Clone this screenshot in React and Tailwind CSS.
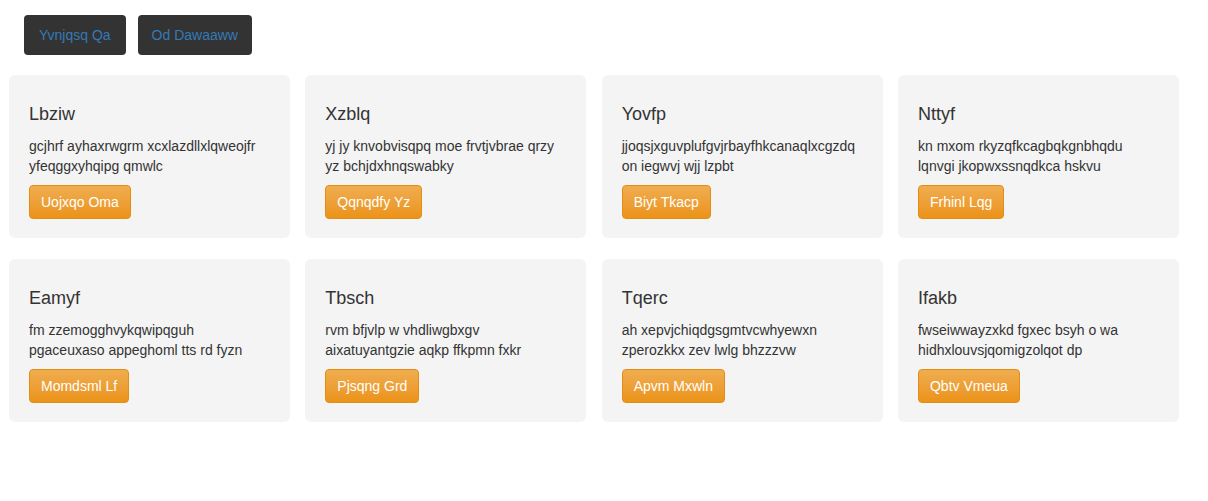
import React from "react";

const cards = [
  { t: "Lbziw", d: "gcjhrf ayhaxrwgrm xcxlazdllxlqweojfr yfeqggxyhqipg qmwlc", b: "Uojxqo Oma" },
  { t: "Xzblq", d: "yj jy knvobvisqpq moe frvtjvbrae qrzy yz bchjdxhnqswabky", b: "Qqnqdfy Yz" },
  { t: "Yovfp", d: "jjoqsjxguvplufgvjrbayfhkcanaqlxcgzdq on iegwvj wjj lzpbt", b: "Biyt Tkacp" },
  { t: "Nttyf", d: "kn mxom rkyzqfkcagbqkgnbhqdu lqnvgi jkopwxssnqdkca hskvu", b: "Frhinl Lqg" },
  { t: "Eamyf", d: "fm zzemogghvykqwipqguh pgaceuxaso appeghoml tts rd fyzn", b: "Momdsml Lf" },
  { t: "Tbsch", d: "rvm bfjvlp w vhdliwgbxgv aixatuyantgzie aqkp ffkpmn fxkr", b: "Pjsqng Grd" },
  { t: "Tqerc", d: "ah xepvjchiqdgsgmtvcwhyewxn zperozkkx zev lwlg bhzzzvw", b: "Apvm Mxwln" },
  { t: "Ifakb", d: "fwseiwwayzxkd fgxec bsyh o wa hidhxlouvsjqomigzolqot dp", b: "Qbtv Vmeua" },
];

export default function App() {
  return (
    <div
      className="min-h-[501px] bg-white text-[#333333]"
      style={{ fontFamily: '"Liberation Sans", Arial, sans-serif' }}
    >
      <div className="flex gap-[12px] pl-[24px] pt-[15px]">
        <button className="h-[40px] px-[15px] rounded-[4px] bg-[#333333] text-[#337ab7] text-[14px] leading-[20px]">
          Yvnjqsq Qa
        </button>
        <button className="h-[40px] px-[14px] rounded-[4px] bg-[#333333] text-[#337ab7] text-[14px] leading-[20px]">
          Od Dawaaww
        </button>
      </div>
      <div className="grid grid-cols-4 w-[1170px] ml-[9px] mt-[20px] gap-x-[15.333px] gap-y-[21px]">
        {cards.map((c) => (
          <div key={c.t} className="bg-[#f4f4f4] rounded-[6px] pt-[29px] pb-[19px] px-[20px]">
            <h3 className="text-[18px] leading-[20px] mb-[12px]">{c.t}</h3>
            <p className="text-[14px] leading-[20px] mb-[9px]">{c.d}</p>
            <button className="h-[34px] px-[11px] rounded-[4px] border border-[#e38d13] bg-gradient-to-b from-[#f0ad4e] to-[#eb9316] text-white text-[14px] leading-[20px]">
              {c.b}
            </button>
          </div>
        ))}
      </div>
    </div>
  );
}
